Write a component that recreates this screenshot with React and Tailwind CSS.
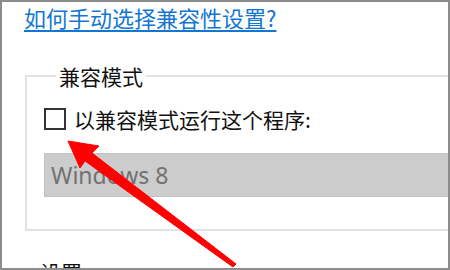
export default function App() {
  return (
    <div className="relative w-[450px] h-[270px] overflow-hidden bg-white border-2 border-[#8c8c8c] font-['Noto_Sans_CJK_SC',sans-serif]">
      <div className="pl-[22px] pt-[1px]">
        <a className="text-[22px] leading-[28px] text-[#1376d2] underline decoration-[1.5px] underline-offset-[3px]">
          如何手动选择兼容性设置?
        </a>
      </div>
      <fieldset className="mt-[32px] ml-[23px] w-[440px] border-2 border-[#e2e2e2] pl-[17px] pr-0 pt-[18px] pb-[32px]">
        <legend className="ml-[12px] px-[3px] text-[21px] leading-[24px] text-[#111111]">兼容模式</legend>
        <div className="flex items-center gap-[8px]">
          <div className="w-[22px] h-[22px] border-2 border-[#333333] bg-white" />
          <span className="text-[21px] leading-[26px] text-[#111111]">以兼容模式运行这个程序:</span>
        </div>
        <div className="mt-[21px] h-[44px] border border-[#c2c2c2] bg-[#cccccc] flex items-center pl-[6px]">
          <span className="font-['Noto_Sans',sans-serif] text-[23px] leading-[30px] text-[#717171]">Windows 8</span>
        </div>
      </fieldset>
      <div className="pl-[38px] mt-[28px] text-[21px] leading-[26px] text-[#111111]">设置</div>
      <svg className="absolute left-[-2px] top-[-2px] pointer-events-none" width="450" height="270" viewBox="0 0 450 270">
        <polygon
          points="68,141 99,146 92,153 236,264 233,267 85,161 80,168"
          fill="#ff0000"
          stroke="#ff0000"
          strokeWidth="1"
          strokeLinejoin="round"
        />
      </svg>
    </div>
  );
}
